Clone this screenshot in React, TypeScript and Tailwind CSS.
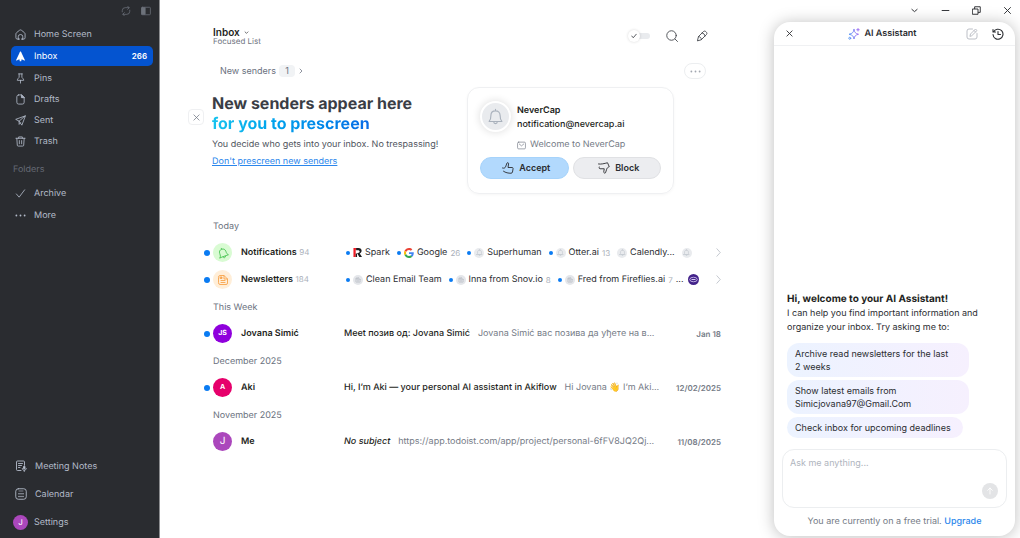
import type { ReactNode } from 'react';

type IconProps = { className?: string; children: ReactNode; w?: number };

function Icon({ className = 'size-3', children, w = 1.8 }: IconProps) {
  return (
    <svg
      viewBox="0 0 24 24"
      className={`shrink-0 ${className}`}
      fill="none"
      stroke="currentColor"
      strokeWidth={w}
      strokeLinecap="round"
      strokeLinejoin="round"
      aria-hidden="true"
    >
      {children}
    </svg>
  );
}

const MAIN_NAV = [
  {
    label: 'Home Screen',
    icon: <path d="M8 22H5a3 3 0 0 1-3-3v-8c0-1.500.6-2.500 1.700-3.300L10 2.700a3.400 3.400 0 0 1 4 0l6.300 5c1.100.8 1.700 1.800 1.700 3.300v8a3 3 0 0 1-3 3h-3M7 22v-5a5 5 0 0 1 10 0v5M7 22h3M14 22h3" />,
  },
  {
    label: 'Inbox',
    count: 266,
    icon: <path d="M12 1c1 0 1.600 1.200 2.300 3.300L21.500 19.500c.5 1-.4 1.700-1.300 1.300L14.500 18l-1 4.500h-3L9.500 18l-5.700 2.800c-.9.4-1.800-.3-1.300-1.300L9.700 4.300C10.400 2.200 11 1 12 1z" fill="currentColor" stroke="none" />,
  },
  {
    label: 'Pins',
    icon: <path d="M8 2h8M9 2v7c0 2-4 3-4 7h14c0-4-4-5-4-7V2M12 16v6" />,
  },
  {
    label: 'Drafts',
    icon: (
      <>
        <path d="M8 2h6l6 6v10a4 4 0 0 1-4 4H8a4 4 0 0 1-4-4V6a4 4 0 0 1 4-4z" />
        <path d="M14 2v6h6z" fill="currentColor" />
      </>
    ),
  },
  {
    label: 'Sent',
    icon: <path d="M22 2 1.500 9.500 9 13.500 14.500 21.500zM22 2 9 13.500M9 13.500v7l3-3.500" />,
  },
  {
    label: 'Trash',
    icon: <path d="M2 5h20M8 5V2h8v3M4 5l1 15a2 2 0 0 0 2 2h10a2 2 0 0 0 2-2l1-15M9.500 10v7M14.500 10v7" />,
  },
];

const FOLDERS = [
  { label: 'Archive', icon: <path d="m3 13 6 7L21 4" /> },
  {
    label: 'More',
    icon: (
      <g fill="currentColor" stroke="none">
        <circle cx="3" cy="12" r="2" />
        <circle cx="12" cy="12" r="2" />
        <circle cx="21" cy="12" r="2" />
      </g>
    ),
  },
];

const TOOLS = [
  {
    label: 'Meeting Notes',
    icon: (
      <>
        <path d="M12 21H5a2 2 0 0 1-2-2V4a2 2 0 0 1 2-2h12a2 2 0 0 1 2 2v6M7 7h8M7 11h6M7 15h3" />
        <rect x="17" y="12" width="3" height="6" rx="1.500" fill="currentColor" />
        <path d="M14.500 17c0 5 8 5 8 0M18.500 21v2" />
      </>
    ),
  },
  {
    label: 'Calendar',
    icon: (
      <>
        <rect x="1.500" y="1.500" width="21" height="21" rx="5" />
        <path d="M8 6h8" strokeWidth="1.200" />
        <g fill="currentColor" stroke="none">
          <circle cx="8" cy="11.500" r="1.500" />
          <circle cx="12" cy="11.500" r="1.500" />
          <circle cx="16" cy="11.500" r="1.500" />
          <circle cx="8" cy="17" r="1.500" />
          <circle cx="12" cy="17" r="1.500" />
          <circle cx="16" cy="17" r="1.500" />
        </g>
      </>
    ),
  },
];

function BellIcon({ className }: { className?: string }) {
  return (
    <Icon className={className} w={1.600}>
      <path d="M3 19h18c-2-2-2.500-3-2.500-8.500C18.500 6.500 16 4 12 4s-6.500 2.500-6.500 6.500C5.500 16 5 17 3 19zM12 4V2M9.500 19.500a2.500 2.500 0 0 0 5 0" />
    </Icon>
  );
}

function NewsIcon({ className }: { className?: string }) {
  return (
    <Icon className={className}>
      <path d="M3 6a3 3 0 0 1 3-3h8l7 7v8a3 3 0 0 1-3 3H6a3 3 0 0 1-3-3zM8 13h8M8 17h8M14 3v7h7" />
      <rect x="7" y="6" width="3" height="3" fill="currentColor" />
    </Icon>
  );
}

function GoogleLogo() {
  return (
    <svg viewBox="0 0 48 48" className="size-[10px] shrink-0" aria-hidden="true">
      <path fill="#EA4335" d="M24 9.500c3.540 0 6.710 1.220 9.210 3.600l6.850-6.850C35.900 2.380 30.470 0 24 0 14.620 0 6.510 5.380 2.560 13.220l7.980 6.190C12.430 13.720 17.740 9.500 24 9.500z" />
      <path fill="#4285F4" d="M46.980 24.550c0-1.570-.15-3.090-.38-4.550H24v9.020h12.940c-.58 2.960-2.260 5.480-4.780 7.180l7.730 6c4.510-4.180 7.090-10.360 7.090-17.650z" />
      <path fill="#FBBC05" d="M10.530 28.590c-.48-1.450-.76-2.990-.76-4.590s.27-3.140.76-4.590l-7.980-6.190C.92 16.460 0 20.120 0 24s.92 7.540 2.560 10.780l7.970-6.190z" />
      <path fill="#34A853" d="M24 48c6.480 0 11.930-2.130 15.890-5.810l-7.730-6c-2.150 1.450-4.920 2.300-8.160 2.300-6.260 0-11.570-4.220-13.470-9.910l-7.980 6.190C6.510 42.620 14.620 48 24 48z" />
    </svg>
  );
}

function SparkLogo() {
  return (
    <svg viewBox="0 0 20 20" className="size-[9px] shrink-0" aria-hidden="true">
      <path d="M1 0h7v4H6v16H1z" fill="#ef1c25" />
      <path d="M7 0h5c9 0 9 10 3 12l5 8h-6l-5-9h2c5 0 5-6 0-6H7zM6 12h3v8H6z" fill="#1d1d1f" />
    </svg>
  );
}

function PurpleLogo() {
  return (
    <svg viewBox="0 0 22 22" className="size-[11px] shrink-0" aria-hidden="true">
      <circle cx="11" cy="11" r="11" fill="#43238a" />
      <ellipse cx="11" cy="11" rx="7.500" ry="4.500" fill="none" stroke="#d9cdf5" strokeWidth="1.600" />
      <path d="M7 11h8" stroke="#d9cdf5" strokeWidth="2" />
    </svg>
  );
}

const GREY_BELL = (
  <span className="flex size-[10px] shrink-0 items-center justify-center rounded-full bg-[#e9ebee] text-[#b4bac3]">
    <BellIcon className="size-[7px]" />
  </span>
);
const GREY_NEWS = (
  <span className="flex size-[10px] shrink-0 items-center justify-center rounded-full bg-[#e4e6ea] text-[#aeb4bd]">
    <NewsIcon className="size-[6px]" />
  </span>
);

type Sender = { name?: string; count?: number; unread?: boolean; logo: ReactNode };

const GROUPS: { title: string; tint: string; icon: ReactNode; count: number; senders: Sender[] }[] = [
  {
    title: 'Notifications',
    tint: 'bg-[#d9fbd3] text-[#4cc455]',
    icon: (
      <span className="-rotate-20">
        <BellIcon className="size-3" />
      </span>
    ),
    count: 94,
    senders: [
      { name: 'Spark', unread: true, logo: <SparkLogo /> },
      { name: 'Google', count: 26, unread: true, logo: <GoogleLogo /> },
      { name: 'Superhuman', unread: true, logo: GREY_BELL },
      { name: 'Otter.ai', count: 13, unread: true, logo: GREY_BELL },
      { name: 'Calendly...', logo: GREY_BELL },
      { logo: GREY_BELL },
    ],
  },
  {
    title: 'Newsletters',
    tint: 'bg-[#ffeed8] text-[#f8a44c]',
    icon: <NewsIcon className="size-3" />,
    count: 184,
    senders: [
      { name: 'Clean Email Team', unread: true, logo: GREY_NEWS },
      { name: 'Inna from Snov.io', count: 8, unread: true, logo: GREY_NEWS },
      { name: 'Fred from Fireflies.ai', count: 7, unread: true, logo: GREY_NEWS },
    ],
  },
];

type Mail = {
  from: string;
  initials: string;
  color: string;
  unread: boolean;
  subject: string;
  preview: string;
  date: string;
};

const SECTIONS: { title: string; mail: Mail }[] = [
  {
    title: 'This Week',
    mail: {
      from: 'Jovana Simić',
      initials: 'JS',
      color: 'bg-[#8f00dc] text-[7px] font-bold',
      unread: true,
      subject: 'Meet позив од: Jovana Simić',
      preview: 'Jovana Simić вас позива да уђете на в...',
      date: 'Jan 18',
    },
  },
  {
    title: 'December 2025',
    mail: {
      from: 'Aki',
      initials: 'A',
      color: 'bg-[#e6006b] text-[7px] font-bold',
      unread: true,
      subject: 'Hi, I’m Aki — your personal AI assistant in Akiflow',
      preview: 'Hi Jovana 👋 I’m Aki...',
      date: '12/02/2025',
    },
  },
  {
    title: 'November 2025',
    mail: {
      from: 'Me',
      initials: 'J',
      color: 'bg-[#ab47bc] text-[10px]',
      unread: false,
      subject: '',
      preview: 'https://app.todoist.com/app/project/personal-6fFV8JQ2Qj...',
      date: '11/08/2025',
    },
  },
];

// the number stays on one line with its unit
const PROMPTS = [
  'Archive read newsletters for the last 2\u00a0weeks',
  'Show latest emails from Simicjovana97@Gmail.Com',
  'Check inbox for upcoming deadlines',
];

function Dot({ on, small }: { on: boolean; small?: boolean }) {
  const size = small ? 'size-1' : 'size-[6px]';
  return <span className={`shrink-0 rounded-full ${size} ${on ? 'bg-[#0a7bf2]' : ''}`} />;
}

function Sidebar() {
  return (
    <aside className="flex w-40 shrink-0 flex-col border-r border-[#8c8d90] bg-[#2a2c30] pb-[2px] text-[9px] leading-5 text-[#b3bbc9]">
      <div className="flex h-6 items-center justify-end gap-[10px] pr-2 pb-[2px] text-[#6d727b]">
        <button aria-label="Refresh">
          <Icon className="size-[10px]">
            <path d="M3 14v-3a7 7 0 0 1 7-7h9M16 1l4 3-4 4M21 10v3a7 7 0 0 1-7 7H5M8 23l-4-3 4-4" />
          </Icon>
        </button>
        <button aria-label="Toggle sidebar">
          <Icon className="size-[10px]">
            <rect x="1.500" y="3" width="21" height="18" rx="2" />
            <path d="M2 4h8v16H2z" fill="currentColor" />
          </Icon>
        </button>
      </div>
      <nav className="flex flex-col gap-px pr-[6px] pl-[11px]">
        {MAIN_NAV.map(item => (
          <a
            key={item.label}
            href="#"
            className={`flex h-5 items-center gap-2 rounded-[5px] pr-[6px] pl-1 ${item.count ? 'my-px bg-[#0454d0] text-white' : ''}`}
          >
            <Icon className="size-[11px]">{item.icon}</Icon>
            <span className="flex-1 pt-[2px]">{item.label}</span>
            {item.count && <span className="text-[8px] font-semibold">{item.count}</span>}
          </a>
        ))}
      </nav>
      <h2 className="mt-[9px] pl-[13px] text-[#656a74]">Folders</h2>
      <nav className="mt-[3px] flex flex-col gap-[2px] pl-[15px]">
        {FOLDERS.map(item => (
          <a key={item.label} href="#" className="flex h-5 items-center gap-2">
            <Icon className="size-[11px]">{item.icon}</Icon>
            <span className="pt-[2px]">{item.label}</span>
          </a>
        ))}
      </nav>
      <nav className="mt-auto flex flex-col">
        {TOOLS.map(item => (
          <a key={item.label} href="#" className="flex h-7 items-center gap-2 pl-[15px]">
            <Icon className="size-3">{item.icon}</Icon>
            <span className="pt-[2px]">{item.label}</span>
          </a>
        ))}
        <a href="#" className="flex h-7 items-center gap-[6px] pl-[13px]">
          <span className="flex size-[15px] items-center justify-center rounded-full bg-[#ab47bc] text-[8px] text-white">J</span>
          <span className="pt-[2px]">Settings</span>
        </a>
      </nav>
    </aside>
  );
}

function ListHeader() {
  return (
    <header className="flex items-start justify-between pr-[13px] pl-[25px]">
      <div>
        <button className="flex items-center gap-1 text-[10px] leading-[10px] font-semibold text-[#1e1f22]">
          Inbox
          <Icon className="size-[5px]" w={3}>
            <path d="m5 9 7 7 7-7" />
          </Icon>
        </button>
        <p className="text-[8px] leading-[9px] text-[#6f757f]">Focused List</p>
      </div>
      <div className="flex h-[18px] items-center gap-4 text-[#44474d]">
        <label className="relative flex h-3 w-[22px] items-center">
          <input type="checkbox" aria-label="Focused list" className="peer sr-only" />
          <span className="ml-2 h-[6px] w-[14px] rounded-full bg-[#e9ebee]" />
          <span className="absolute left-0 flex size-3 items-center justify-center rounded-full bg-white shadow-[0_0_3px_rgba(0,0,0,0.16)]">
            <Icon className="size-[6px]" w={3.500}>
              <path d="m3 12 6 7L21 5" />
            </Icon>
          </span>
        </label>
        <button aria-label="Search">
          <Icon className="size-3">
            <circle cx="11" cy="11" r="9.500" />
            <path d="m18 18 5 5" />
          </Icon>
        </button>
        <button aria-label="Compose" className="ml-[2px]">
          <Icon className="size-3">
            <path d="m3 21 2-8L15 3c3-3 9 3 6 6L11 19zM5 13c3 0 6 3 6 6M12 6c3 0 6 3 6 6" />
          </Icon>
        </button>
      </div>
    </header>
  );
}

function Prescreen() {
  return (
    <section>
      <div className="mt-[17px] flex h-4 items-center pr-[15px] pl-8 text-[9px] text-[#6b7280]">
        <button className="flex items-center gap-[3px]">
          New senders
          <span className="flex h-3 w-4 items-center justify-center rounded bg-[#f1f3f5]">1</span>
          <Icon className="size-[6px]" w={3}>
            <path d="m8 4 8 8-8 8" />
          </Icon>
        </button>
        <button aria-label="More options" className="ml-auto flex h-4 w-[22px] items-center justify-center rounded-full border border-[#eceef0] text-[#a2a7b0]">
          <Icon className="size-[11px]">{FOLDERS[1].icon}</Icon>
        </button>
      </div>
      <div className="mt-2 flex items-start pr-[47px]">
        <button aria-label="Dismiss" className="mt-[22px] mr-2 flex size-4 shrink-0 items-center justify-center rounded border border-[#eff0f2] text-[#6b7280]">
          <Icon className="size-[7px]" w={2.500}>
            <path d="m3 3 18 18M21 3 3 21" />
          </Icon>
        </button>
        <div className="min-w-0 flex-1 pt-[6px]">
          <h1 className="text-base leading-5 font-bold whitespace-nowrap text-[#3a3d45]">
            New senders appear here
            <span className="block w-fit bg-linear-to-r from-[#17c3ee] to-[#0b6be6] bg-clip-text text-transparent">for you to prescreen</span>
          </h1>
          <p className="mt-1 text-[9px] leading-4 whitespace-nowrap text-[#4f545d]">You decide who gets into your inbox. No trespassing!</p>
          <a href="#" className="block w-fit text-[9px] leading-[18px] text-[#2a86ec] underline">Don't prescreen new senders</a>
        </div>
        <div className="w-[207px] shrink-0 rounded-xl border border-[#eff0f2] px-3 pt-[13px] pb-[14px] shadow-[0_1px_3px_rgba(0,0,0,0.04)]">
          <div className="flex gap-[6px]">
            <span className="flex size-[31px] shrink-0 items-center justify-center rounded-full border-2 border-white bg-[#e9ebee] text-[#a9b1bc] shadow-[0_0_8px_rgba(0,0,0,0.14)]">
              <BellIcon className="size-[17px]" />
            </span>
            <div className="text-[9px] leading-[14px] text-[#1e1f22]">
              <p className="mt-[3px] font-semibold">NeverCap</p>
              <p className="font-medium">notification@nevercap.ai</p>
              <p className="mt-[6px] flex items-center gap-1 text-[#757b86]">
                <Icon className="size-[9px]">
                  <rect x="1.500" y="3" width="21" height="18" rx="3" />
                  <path d="m6 8 6 5 6-5" />
                </Icon>
                Welcome to NeverCap
              </p>
            </div>
          </div>
          <div className="mt-[5px] grid grid-cols-2 gap-1 text-[9px] font-semibold text-[#2b2d31]">
            <button className="flex h-[22px] items-center justify-center gap-[5px] rounded-full border border-[#a6d3fb] bg-[#b2d9fd] pl-1">
              <Icon className="size-3" w={1.800}>
                <path d="M1 12c3 1 5 0 6-2l3-8c1-1.500 3.500-.5 3.200 1.500L12 11h8c2 0 2.500 1 2 3l-1 6c-.4 1.600-1.400 2.500-3 2.500-5 0-11-1-15-4" />
              </Icon>
              Accept
            </button>
            <button className="flex h-[22px] items-center justify-center gap-[5px] rounded-full border border-[#e0e1e4] bg-[#ecedf0] pl-1">
              <Icon className="size-3" w={1.800}>
                <path d="M1 4c5 1 12-1 18-2.500l3.500 8c-3 1-5 3-5.500 6l-2 6c-1 1.500-4 .500-3.500-2l1-6H4c-2-.5-2-2-1.500-3.500" />
              </Icon>
              Block
            </button>
          </div>
        </div>
      </div>
    </section>
  );
}

function MailList() {
  return (
    <section className="mt-[18px] text-[9px]">
      <h2 className="flex h-[27px] items-center pt-[2px] pl-[25px] text-[#6b7280]">Today</h2>
      <ul>
        {GROUPS.map(group => (
          <li key={group.title} className="flex h-[27px] items-center pl-4">
            <Dot on />
            <span className={`mr-[9px] ml-[3px] flex size-[19px] shrink-0 items-center justify-center rounded-full ${group.tint}`}>{group.icon}</span>
            <span className="w-[105px] shrink-0 text-[#1e1f22]">
              <span className="font-semibold">{group.title}</span> <span className="text-[8px] text-[#a9afb9]">{group.count}</span>
            </span>
            <span className="flex min-w-0 flex-1 items-center gap-[7px] whitespace-nowrap text-[#2b2d31]">
              {group.senders.map((s, i) => (
                <span key={i} className="flex items-center gap-[3px]">
                  {s.unread && <Dot on small />}
                  {s.logo}
                  {s.name}
                  {s.count && <span className="text-[8px] text-[#a9afb9]">{s.count}</span>}
                </span>
              ))}
              {group.title === 'Newsletters' && (
                <span className="-ml-1 flex items-center gap-1">
                  ...
                  <PurpleLogo />
                </span>
              )}
            </span>
            <Icon className="size-[9px] text-[#a9afb9]">
              <path d="m13 2 9 10-9 10" />
            </Icon>
          </li>
        ))}
      </ul>
      {SECTIONS.map(({ title, mail }) => (
        <div key={title}>
          <h2 className="flex h-[27px] items-center pt-[2px] pl-[25px] text-[#6b7280]">{title}</h2>
          <a href="#" className="flex h-[27px] items-center pl-4">
            <Dot on={mail.unread} />
            <span className={`mr-[9px] ml-[3px] flex size-[19px] shrink-0 items-center justify-center rounded-full text-white ${mail.color}`}>{mail.initials}</span>
            <span className="w-[103px] shrink-0 font-semibold text-[#1e1f22]">{mail.from}</span>
            <span className="min-w-0 flex-1 whitespace-nowrap text-[#767c87]">
              {mail.subject ? (
                <span className="mr-2 font-medium text-[#1e1f22]">{mail.subject}</span>
              ) : (
                <em className="mr-2 font-medium text-[#1e1f22]">No subject</em>
              )}
              {mail.preview}
            </span>
            <time className="text-[8px] font-semibold text-[#767c87]">{mail.date}</time>
          </a>
        </div>
      ))}
    </section>
  );
}

function WindowControls() {
  return (
    <div className="flex h-[22px] shrink-0 items-center justify-end gap-[22px] pr-[3px] pb-[2px] text-[#2b2d31]">
      <button aria-label="Options">
        <Icon className="size-[9px]" w={2.500}>
          <path d="m5 9 7 6 7-6" />
        </Icon>
      </button>
      <button aria-label="Minimize">
        <Icon className="size-[9px]" w={2.500}>
          <path d="M3 12h18" />
        </Icon>
      </button>
      <button aria-label="Restore">
        <Icon className="size-[9px]" w={2.500}>
          <path d="M2 8h14v14H2zM7 7V2h15v15h-5" />
        </Icon>
      </button>
      <button aria-label="Close">
        <Icon className="size-[9px]" w={2.500}>
          <path d="m4 4 16 16M20 4 4 20" />
        </Icon>
      </button>
    </div>
  );
}

function Assistant() {
  return (
    <aside className="flex w-[246px] shrink-0 flex-col pr-[5px] pb-[2px]">
      <WindowControls />
      <div className="flex flex-1 flex-col rounded-2xl bg-white shadow-[0_1px_16px_rgba(0,0,0,0.26)]">
        <header className="flex h-6 items-center border-b border-[#f0f1f3] px-[11px] text-[#2b2d31]">
          <button aria-label="Close assistant" className="flex pl-[1px]">
            <Icon className="size-[7px]" w={3}>
              <path d="m3 3 18 18M21 3 3 21" />
            </Icon>
          </button>
          <h2 className="flex flex-1 items-center justify-center gap-1 pl-[6px] text-[9px] font-semibold">
            <svg viewBox="0 0 24 24" className="size-3" fill="none" stroke="url(#spark)" strokeWidth="1.800" strokeLinejoin="round" strokeLinecap="round" aria-hidden="true">
              <defs>
                <linearGradient id="spark" gradientUnits="userSpaceOnUse" x1="0" y1="12" x2="24" y2="12">
                  <stop offset="0" stopColor="#4c9bf5" />
                  <stop offset="1" stopColor="#a55cf0" />
                </linearGradient>
              </defs>
              <path d="M12 3c1 6 3 8 9 9.500-6 1.500-8 3.500-9 9.500-1-6-3-8-10-9.500C9 11 11 9 12 3zM20 1v5M17.500 3.500h5" />
              <circle cx="3.500" cy="20.500" r="2" />
            </svg>
            AI Assistant
          </h2>
          <div className="flex items-center gap-[14px]">
            <button aria-label="New chat" className="text-[#b4b8bf]">
              <Icon className="size-3">
                <path d="M13 2H6a4 4 0 0 0-4 4v12a4 4 0 0 0 4 4h12a4 4 0 0 0 4-4v-7M8 16l1-4L19 2l3 3-10 10zM16 5l3 3" />
              </Icon>
            </button>
            <button aria-label="History">
              <Icon className="size-3" w={2.200}>
                <path d="M3 8a10 10 0 1 1-1 5M2 3v5h5M12 7v6h5" />
              </Icon>
            </button>
          </div>
        </header>
        <div className="flex flex-1 flex-col items-start justify-end pr-5 pl-[13px] text-[9px] text-[#2b2d31]">
          <h3 className="text-[10px] leading-4 font-bold text-[#1e1f22]">Hi, welcome to your AI Assistant!</h3>
          <p className="leading-[14px]">I can help you find important information and organize your inbox. Try asking me to:</p>
          <div className="mt-2 flex flex-col items-start gap-[3px]">
            {PROMPTS.map(prompt => (
              <button
                key={prompt}
                className="max-w-[182px] rounded-xl bg-linear-to-r from-[#ecf3ff] to-[#f6f0fe] py-1 pr-3 pl-2 text-left leading-[13px]"
              >
                {prompt}
              </button>
            ))}
          </div>
        </div>
        <div className="mx-2 mt-[11px] flex h-[59px] rounded-xl border border-[#eceef0]">
          <textarea
            aria-label="Message"
            placeholder="Ask me anything..."
            className="flex-1 resize-none bg-transparent px-[7px] pt-[6px] text-[9px] leading-[14px] outline-none placeholder:text-[#b0b5be]"
          />
          <button aria-label="Send" className="mt-auto mr-2 mb-2 flex size-4 items-center justify-center rounded-full bg-[#e3e4e6] text-white">
            <Icon className="size-2" w={2.500}>
              <path d="M12 21V3M5 10l7-7 7 7" />
            </Icon>
          </button>
        </div>
        <p className="pt-[5px] pb-[5px] text-center text-[9px] leading-[18px] text-[#757b86]">
          You are currently on a free trial. <a href="#" className="font-medium text-[#2a86ec]">Upgrade</a>
        </p>
      </div>
    </aside>
  );
}

export default function App() {
  return (
    <div className="flex min-h-screen bg-white font-[Inter,'Noto_Sans',sans-serif] [text-rendering:geometricPrecision]">
      <Sidebar />
      <main className="min-w-0 flex-1 pt-[27px] pr-[53px] pl-7">
        <ListHeader />
        <Prescreen />
        <MailList />
      </main>
      <Assistant />
    </div>
  );
}
